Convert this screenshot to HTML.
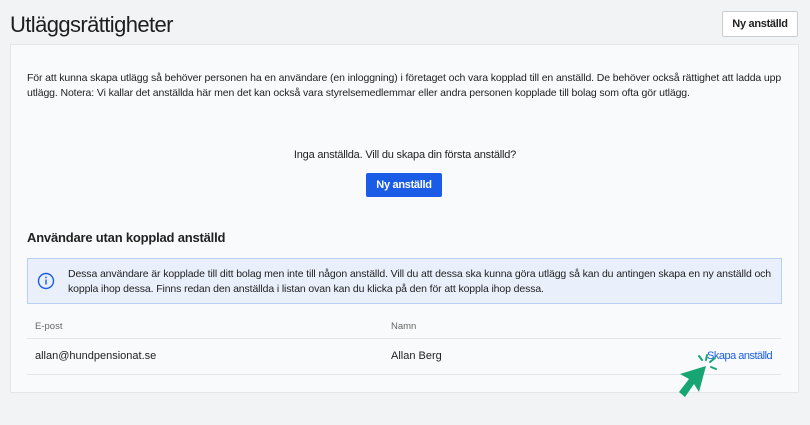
<!DOCTYPE html><html><head><meta charset="utf-8"><style>
body{margin:0;width:810px;height:425px;background:#f2f3f5;font-family:"Liberation Sans",sans-serif;color:#222;position:relative;overflow:hidden}
.a{position:absolute;white-space:nowrap}
.sm{font-size:10.5px;letter-spacing:-0.12px}
</style></head><body>
<div class="a" style="left:10px;top:12px;font-size:22px;color:#1e1e1e;letter-spacing:-0.6px">Utläggsrättigheter</div>
<div class="a" style="left:722px;top:11px;width:74px;height:24px;border:1px solid #c9ccd1;background:#fff;border-radius:2px;font-size:11px;font-weight:bold;text-align:center;line-height:24px;letter-spacing:-0.3px">Ny anställd</div>
<div class="a" style="left:10px;top:44px;width:787px;height:347px;background:#f9fafb;border:1px solid #e3e5e8"></div>
<div class="a sm" style="left:27px;top:71px;line-height:15px">För att kunna skapa utlägg så behöver personen ha en användare (en inloggning) i företaget och vara kopplad till en anställd. De behöver också rättighet att ladda upp<br>utlägg. Notera: Vi kallar det anställda här men det kan också vara styrelsemedlemmar eller andra personen kopplade till bolag som ofta gör utlägg.</div>
<div class="a" style="left:0;width:810px;text-align:center;top:149px;font-size:11px;letter-spacing:-0.2px">Inga anställda. Vill du skapa din första anställd?</div>
<div class="a" style="left:366px;top:173px;width:76px;height:24px;background:#1a5ce6;color:#fff;border-radius:2px;font-size:11px;font-weight:bold;text-align:center;line-height:24px;letter-spacing:-0.3px">Ny anställd</div>
<div class="a" style="left:27px;top:230px;font-size:13px;font-weight:bold;letter-spacing:-0.2px">Användare utan kopplad anställd</div>
<div class="a" style="left:27px;top:258px;width:753px;height:44px;background:#e9f0fb;border:1px solid #b9d0f5"></div>
<svg class="a" style="left:37px;top:272px" width="18" height="18" viewBox="0 0 18 18"><circle cx="9" cy="9" r="7.5" fill="none" stroke="#1a5ce6" stroke-width="1.4"/><rect x="8.3" y="7.5" width="1.4" height="5" fill="#1a5ce6"/><circle cx="9" cy="5.4" r=".9" fill="#1a5ce6"/></svg>
<div class="a sm" style="left:68px;top:267px;line-height:15px">Dessa användare är kopplade till ditt bolag men inte till någon anställd. Vill du att dessa ska kunna göra utlägg så kan du antingen skapa en ny anställd och<br>koppla ihop dessa. Finns redan den anställda i listan ovan kan du klicka på den för att koppla ihop dessa.</div>
<div class="a" style="left:35px;top:321px;font-size:9.5px;color:#666">E-post</div>
<div class="a" style="left:391px;top:321px;font-size:9.5px;color:#666">Namn</div>
<div class="a" style="left:27px;top:338px;width:754px;height:1px;background:#e3e5e8"></div>
<div class="a" style="left:35px;top:350px;font-size:11px">allan@hundpensionat.se</div>
<div class="a" style="left:391px;top:350px;font-size:11px">Allan Berg</div>
<div class="a" style="left:707px;top:350px;font-size:11px;color:#1a5ce6;letter-spacing:-0.5px">Skapa anställd</div>
<div class="a" style="left:27px;top:374px;width:754px;height:1px;background:#e3e5e8"></div>
<svg class="a" style="left:674px;top:352px" width="50" height="48" viewBox="0 0 50 48"><path d="M32 14 L6 22 L15 27 L5 40 L11 45 L20 32 L25 40 Z" fill="#17a673"/><g stroke="#17a673" stroke-width="2" stroke-linecap="round"><line x1="32" y1="8" x2="33" y2="3"/><line x1="36" y1="10" x2="41" y2="6"/><line x1="37" y1="15" x2="42" y2="17"/><line x1="28" y1="8" x2="25" y2="4"/></g></svg>
</body></html>
